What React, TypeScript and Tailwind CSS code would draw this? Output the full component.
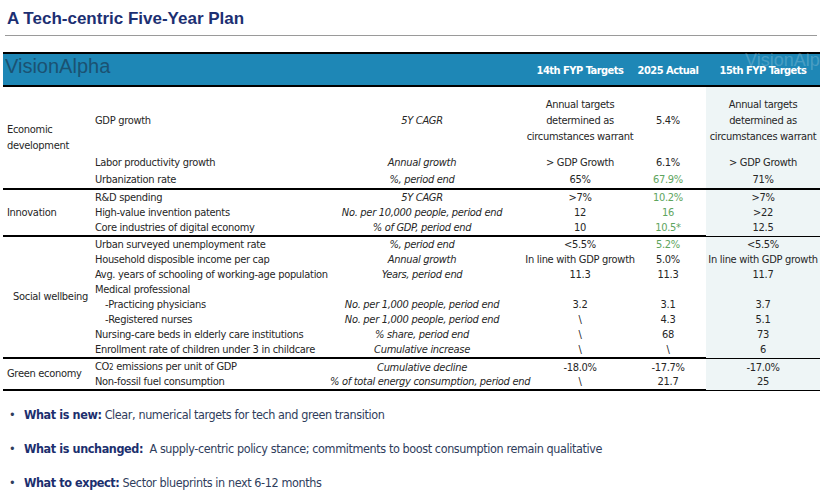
import type { ReactNode } from 'react'

type Row = {
  ind: ReactNode
  unit?: string
  t14?: ReactNode
  act?: string
  green?: boolean
  t15?: ReactNode
  h?: string
}

type Group = { name: ReactNode; pad?: string; rows: Row[] }

const multi = (
  <>
    Annual targets
    <br />
    determined as
    <br />
    circumstances warrant
  </>
)

const groups: Group[] = [
  {
    name: (
      <>
        Economic
        <br />
        development
      </>
    ),
    rows: [
      { ind: 'GDP growth', unit: '5Y CAGR', t14: multi, act: '5.4%', t15: multi, h: 'h-[67px]' },
      { ind: 'Labor productivity growth', unit: 'Annual growth', t14: '> GDP Growth', act: '6.1%', t15: '> GDP Growth', h: 'h-[17px]' },
      { ind: 'Urbanization rate', unit: '%, period end', t14: '65%', act: '67.9%', green: true, t15: '71%', h: 'h-[17px]' },
    ],
  },
  {
    name: 'Innovation',
    rows: [
      { ind: 'R&D spending', unit: '5Y CAGR', t14: '>7%', act: '10.2%', green: true, t15: '>7%' },
      { ind: 'High-value invention patents', unit: 'No. per 10,000 people, period end', t14: '12', act: '16', green: true, t15: '>22' },
      { ind: 'Core industries of digital economy', unit: '% of GDP, period end', t14: '10', act: '10.5*', green: true, t15: '12.5' },
    ],
  },
  {
    name: 'Social wellbeing',
    pad: 'pl-[10px]',
    rows: [
      { ind: 'Urban surveyed unemployment rate', unit: '%, period end', t14: '<5.5%', act: '5.2%', green: true, t15: '<5.5%' },
      { ind: 'Household disposible income per cap', unit: 'Annual growth', t14: 'In line with GDP growth', act: '5.0%', t15: 'In line with GDP growth' },
      { ind: 'Avg. years of schooling of working-age population', unit: 'Years, period end', t14: '11.3', act: '11.3', t15: '11.7' },
      { ind: 'Medical professional' },
      { ind: <span className="pl-[10px]">-Practicing physicians</span>, unit: 'No. per 1,000 people, period end', t14: '3.2', act: '3.1', t15: '3.7' },
      { ind: <span className="pl-[10px]">-Registered nurses</span>, unit: 'No. per 1,000 people, period end', t14: '\\', act: '4.3', t15: '5.1' },
      { ind: 'Nursing-care beds in elderly care institutions', unit: '% share, period end', t14: '\\', act: '68', t15: '73' },
      { ind: 'Enrollment rate of children under 3 in childcare', unit: 'Cumulative increase', t14: '\\', act: '\\', t15: '6' },
    ],
  },
  {
    name: 'Green economy',
    rows: [
      {
        ind: (
          <>
            CO<span className="text-[8px]">2</span> emissions per unit of GDP
          </>
        ),
        unit: 'Cumulative decline',
        t14: '-18.0%',
        act: '-17.7%',
        t15: '-17.0%',
      },
      { ind: 'Non-fossil fuel consumption', unit: '% of total energy consumption, period end', t14: '\\', act: '21.7', t15: '25' },
    ],
  },
]

const cols = 'grid grid-cols-[238px_184px_132px_44px_16px_114px]'

function TableRow({ r }: { r: Row }) {
  return (
    <div className={`${cols} ${r.h ?? 'h-[15px]'} items-center leading-[16px]`}>
      <div className="pl-[3px] whitespace-nowrap">{r.ind}</div>
      <div className="text-center italic whitespace-nowrap">{r.unit}</div>
      <div className="text-center whitespace-nowrap">{r.t14}</div>
      <div className={`text-center whitespace-nowrap ${r.green ? 'text-[#5ea55e]' : ''}`}>{r.act}</div>
      <div className="h-full" />
      <div className="h-full bg-[#eef5f6] flex items-center justify-center whitespace-nowrap text-center">{r.t15}</div>
    </div>
  )
}

export default function App() {
  return (
    <div className="w-[822px] h-[494px] bg-white overflow-hidden relative text-[#262626]">
      <div className="mx-[5px] pt-[9px] pb-[6px] border-b border-[#9a9a9a]">
        <h1 className="pl-[2px] font-['Liberation_Sans',Arial,sans-serif] font-bold text-[17px] leading-[20px] text-[#1c2f72]">
          A Tech-centric Five-Year Plan
        </h1>
      </div>

      <div className="mt-[16px] ml-[3px] w-[817px] font-['DejaVu_Sans_Condensed','DejaVu_Sans',sans-serif] text-[11px] tracking-[-0.3px]">
        <div className="relative border-y-2 border-black bg-[#1e87b6] h-[35px] grid grid-cols-[511px_132px_44px_16px_114px] text-white font-bold tracking-[-0.5px]">
          <div className="absolute left-[742px] top-[-4px] font-['Liberation_Sans',Arial,sans-serif] font-normal tracking-normal text-[18px] leading-[20px] text-white/20 whitespace-nowrap pointer-events-none">
            VisionAlph
          </div>
          <div className="pl-[2px] pt-[1px] font-['Liberation_Sans',Arial,sans-serif] font-normal tracking-normal text-[20px] leading-[22px] text-[#1b5272]">
            VisionAlpha
          </div>
          <div className="relative flex items-center justify-center pt-[3px] whitespace-nowrap">14th FYP Targets</div>
          <div className="relative flex items-center justify-center pt-[3px] whitespace-nowrap">2025 Actual</div>
          <div />
          <div className="relative flex items-center justify-center pt-[3px] whitespace-nowrap">15th FYP Targets</div>
        </div>

        {groups.map((g, i) => (
          <div key={i} className={`flex ${i > 0 ? 'border-t-2 border-black' : ''}`}>
            <div className={`w-[89px] shrink-0 ${g.pad ?? 'pl-[4px]'} flex items-center leading-[16px] whitespace-nowrap`}>
              <div>{g.name}</div>
            </div>
            <div className="flex flex-col">
              {g.rows.map((r, j) => (
                <TableRow key={j} r={r} />
              ))}
            </div>
          </div>
        ))}
        <div className="border-t-2 border-black" />
      </div>

      <ul className="mt-[15px] flex flex-col gap-[16px] font-['DejaVu_Sans_Condensed','DejaVu_Sans',sans-serif] text-[12.5px] tracking-[-0.4px] leading-[18px] text-[#2f3d5c]">
        <li className="flex">
          <span className="w-[24px] pl-[9px] shrink-0">•</span>
          <span>
            <b className="text-[#1c2f6e]">What is new:</b> Clear, numerical targets for tech and green transition
          </span>
        </li>
        <li className="flex">
          <span className="w-[24px] pl-[9px] shrink-0">•</span>
          <span>
            <b className="text-[#1c2f6e]">What is unchanged:</b>&nbsp; A supply-centric policy stance; commitments to boost consumption remain qualitative
          </span>
        </li>
        <li className="flex">
          <span className="w-[24px] pl-[9px] shrink-0">•</span>
          <span>
            <b className="text-[#1c2f6e]">What to expect:</b> Sector blueprints in next 6-12 months
          </span>
        </li>
      </ul>
    </div>
  )
}
